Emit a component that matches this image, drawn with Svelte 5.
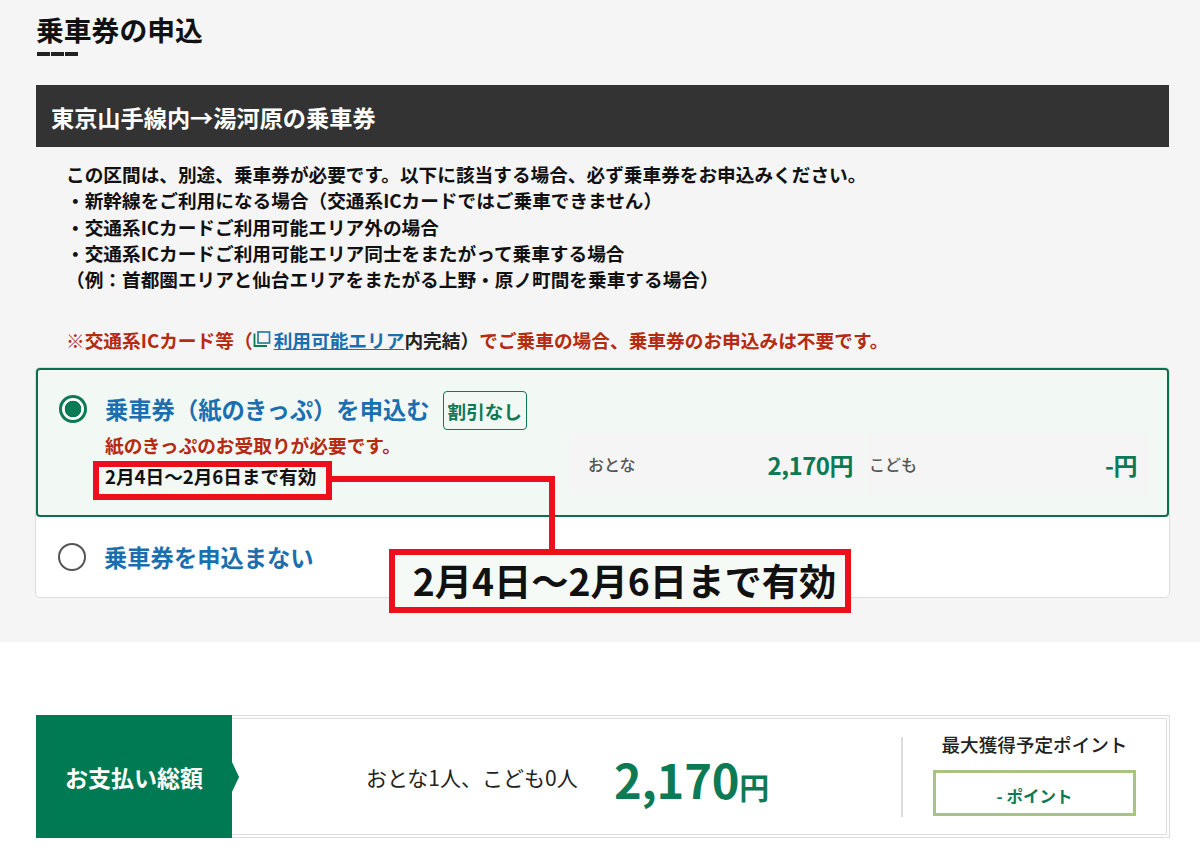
<script lang="ts">
  const notes = [
    '・新幹線をご利用になる場合（交通系ICカードではご乗車できません）',
    '・交通系ICカードご利用可能エリア外の場合',
    '・交通系ICカードご利用可能エリア同士をまたがって乗車する場合',
    '（例：首都圏エリアと仙台エリアをまたがる上野・原ノ町間を乗車する場合）'
  ];
</script>

<div class="page">
  <section class="apply">
    <h2 class="title">乗車券の申込</h2>
    <div class="dashes"><i></i><i></i><i></i></div>
    <h3 class="bar">東京山手線内→湯河原の乗車券</h3>

    <div class="notes">
      <p>この区間は、別途、乗車券が必要です。以下に該当する場合、必ず乗車券をお申込みください。</p>
      {#each notes as note}
        <p>{note}</p>
      {/each}
    </div>

    <p class="warn">
      ※交通系ICカード等（<svg class="ext" width="18" height="18" viewBox="0 0 18 18">
        <path d="M1.5 3.5v12.5H14" fill="none" stroke="#0f7a52" stroke-width="1.8" />
        <rect x="5" y="2" width="11.5" height="11" fill="none" stroke="#2a7f9a" stroke-width="1.7" />
      </svg><a href="#area">利用可能エリア</a><span class="black">内完結）</span>でご乗車の場合、乗車券のお申込みは不要です。
    </p>

    <div class="options">
      <div class="option selected">
        <div class="option-main">
          <div class="option-head">
            <span class="radio on"></span>
            <span class="option-label">乗車券（紙のきっぷ）を申込む</span>
            <span class="tag">割引なし</span>
          </div>
          <p class="need">紙のきっぷのお受取りが必要です。</p>
          <p class="valid">2月4日〜2月6日まで有効</p>
        </div>
        <div class="fares">
          <div class="fare adult">
            <span class="who">おとな</span>
            <span class="price">2,170円</span>
          </div>
          <div class="fare child">
            <span class="who">こども</span>
            <span class="price">-円</span>
          </div>
        </div>
      </div>
      <div class="option plain">
        <span class="radio"></span>
        <span class="option-label">乗車券を申込まない</span>
      </div>
    </div>
  </section>

  <section class="total">
    <div class="total-label">お支払い総額</div>
    <div class="total-body">
      <span class="count">おとな1人、こども0人</span>
      <span class="amount">2,170<small>円</small></span>
    </div>
    <div class="points">
      <div class="points-title">最大獲得予定ポイント</div>
      <div class="points-box">- ポイント</div>
    </div>
  </section>

  <!-- 赤枠の注釈 -->
  <div class="mark-small"></div>
  <div class="mark-line-h"></div>
  <div class="mark-line-v"></div>
  <div class="mark-big">2月4日〜2月6日まで有効</div>
</div>

<style>
  :global(body) {
    margin: 0;
    background: #fff;
  }

  .page {
    position: relative;
    width: 1200px;
    height: 860px;
    overflow: hidden;
    font-family: "Noto Sans CJK JP", "Noto Sans", sans-serif;
    color: #111;
  }

  p, h2, h3 {
    margin: 0;
  }

  .apply {
    box-sizing: border-box;
    height: 642px;
    padding: 10px 31px 0 36px;
    background: #f5f5f5;
  }

  .title {
    height: 42px;
    font-size: 27.8px;
    line-height: 38px;
    font-weight: 700;
  }

  .dashes {
    display: flex;
    gap: 1px;
    height: 4px;
    margin-left: 1px;
  }

  .dashes i {
    width: 13px;
    height: 4px;
    background: #222;
  }

  .bar {
    box-sizing: border-box;
    height: 62px;
    margin-top: 29px;
    padding: 1px 0 0 15px;
    background: #333;
    color: #fff;
    font-size: 23.2px;
    line-height: 62px;
    font-weight: 700;
  }

  .notes {
    margin-top: 14px;
    padding-left: 30px;
    font-size: 18.66px;
    line-height: 26.3px;
    font-weight: 700;
    white-space: nowrap;
  }

  .warn {
    display: flex;
    align-items: center;
    height: 26px;
    margin-top: 34px;
    padding-left: 30px;
    color: #b52a10;
    font-size: 18.7px;
    font-weight: 700;
    white-space: nowrap;
  }

  .ext {
    flex: none;
    margin-right: 3px;
  }

  .warn a {
    color: #1a6fb0;
    text-decoration: underline;
  }

  .black {
    color: #222;
  }

  .options {
    margin-top: 16px;
    border-radius: 4px;
    background: #fff;
    box-shadow: 0 0 0 1px #ddd;
  }

  .option {
    box-sizing: border-box;
    display: flex;
  }

  .selected {
    height: 149px;
    padding: 0 17px 0 21px;
    border: 2px solid #0b6e4f;
    border-radius: 4px;
    background: #f2f8f3;
  }

  .plain {
    align-items: center;
    gap: 18px;
    height: 80px;
    padding: 0 0 0 22px;
  }

  .option-main {
    flex: none;
    width: 510px;
    padding-top: 18px;
  }

  .option-head {
    display: flex;
    align-items: center;
    gap: 18px;
    height: 42px;
  }

  .radio {
    box-sizing: border-box;
    flex: none;
    width: 28px;
    height: 28px;
    border: 2px solid #555;
    border-radius: 50%;
    background: #fff;
  }

  .radio.on {
    border: 3px solid #0b7a55;
    background: radial-gradient(circle, #0b7a55 0 8px, #fff 8.6px);
  }

  .option-label {
    color: #1a6fb0;
    font-size: 23.3px;
    font-weight: 700;
    white-space: nowrap;
  }

  .tag {
    box-sizing: border-box;
    height: 39px;
    margin: 2px 0 0 -5px;
    padding: 0 4px;
    border: 1px solid #0b7a55;
    border-radius: 4px;
    color: #0b7a55;
    font-size: 18.6px;
    line-height: 37px;
    font-weight: 700;
    white-space: nowrap;
  }

  .need {
    margin: 2px 0 0 46px;
    color: #b52a10;
    font-size: 18.7px;
    line-height: 26px;
    font-weight: 700;
    white-space: nowrap;
  }

  .valid {
    margin: 5px 0 0 46px;
    color: #111;
    font-size: 18.6px;
    line-height: 26px;
    font-weight: 700;
    white-space: nowrap;
  }

  .fares {
    display: flex;
    flex: 1;
    gap: 2px;
    height: 62px;
    margin-top: 63px;
  }

  .fare {
    box-sizing: border-box;
    display: flex;
    align-items: center;
    justify-content: space-between;
    background: #f5f5f5;
  }

  .adult {
    flex: none;
    width: 295px;
    padding: 0 11px 0 19px;
  }

  .child {
    flex: 1;
    padding: 0 13px 0 3px;
  }

  .who {
    color: #555;
    font-size: 16px;
    font-weight: 500;
  }

  .price {
    color: #0b7a55;
    font-size: 24px;
    font-weight: 700;
    letter-spacing: -0.5px;
  }

  .total {
    box-sizing: border-box;
    display: flex;
    align-items: center;
    width: 1134px;
    height: 123px;
    margin: 73px 0 0 36px;
    border: 4px double #ddd;
    background: #fff;
  }

  .total-label {
    position: relative;
    flex: none;
    width: 196px;
    height: 123px;
    margin-left: -4px;
    background: #007a53;
    color: #fff;
    font-size: 23px;
    line-height: 124px;
    font-weight: 700;
    text-align: center;
    white-space: nowrap;
  }

  .total-label::after {
    content: "";
    position: absolute;
    left: 100%;
    top: 50%;
    margin-top: -15px;
    border-left: 7px solid #007a53;
    border-top: 15px solid transparent;
    border-bottom: 15px solid transparent;
  }

  .total-body {
    display: flex;
    flex: 1;
    align-items: center;
    padding-left: 134px;
    white-space: nowrap;
  }

  .count {
    width: 248px;
    color: #222;
    font-size: 21px;
    font-weight: 400;
  }

  .amount {
    padding-top: 12px;
    color: #0b7a55;
    font-size: 47px;
    line-height: 60px;
    font-weight: 700;
    letter-spacing: -0.2px;
  }

  .amount small {
    font-size: 30px;
    letter-spacing: 0;
  }

  .points {
    box-sizing: border-box;
    flex: none;
    width: 263px;
    height: 80px;
    margin-right: 2px;
    padding-left: 30px;
    border-left: 2px solid #ddd;
  }

  .points-title {
    height: 36px;
    margin-top: -11px;
    margin-right: 28px;
    color: #222;
    font-size: 18.6px;
    line-height: 36px;
    font-weight: 500;
    text-align: center;
    white-space: nowrap;
  }

  .points-box {
    box-sizing: border-box;
    width: 203px;
    height: 46px;
    margin-top: 8px;
    border: 3px solid #a9c47f;
    color: #0b7a55;
    font-size: 16.5px;
    line-height: 46px;
    font-weight: 700;
    text-align: center;
  }

  .mark-small {
    position: absolute;
    left: 93px;
    top: 461px;
    width: 239px;
    height: 39px;
    box-sizing: border-box;
    border: 6px solid #ee0f1d;
  }

  .mark-line-h {
    position: absolute;
    left: 331px;
    top: 476px;
    width: 224px;
    height: 6px;
    background: #ee0f1d;
  }

  .mark-line-v {
    position: absolute;
    left: 549px;
    top: 476px;
    width: 6px;
    height: 74px;
    background: #ee0f1d;
  }

  .mark-big {
    position: absolute;
    left: 389px;
    top: 549px;
    box-sizing: border-box;
    width: 462px;
    height: 64px;
    padding-left: 9px;
    border: 6px solid #ee0f1d;
    background: #f6faf7;
    color: #111;
    font-size: 37.3px;
    line-height: 50px;
    font-weight: 700;
    text-align: center;
    white-space: nowrap;
  }
</style>
